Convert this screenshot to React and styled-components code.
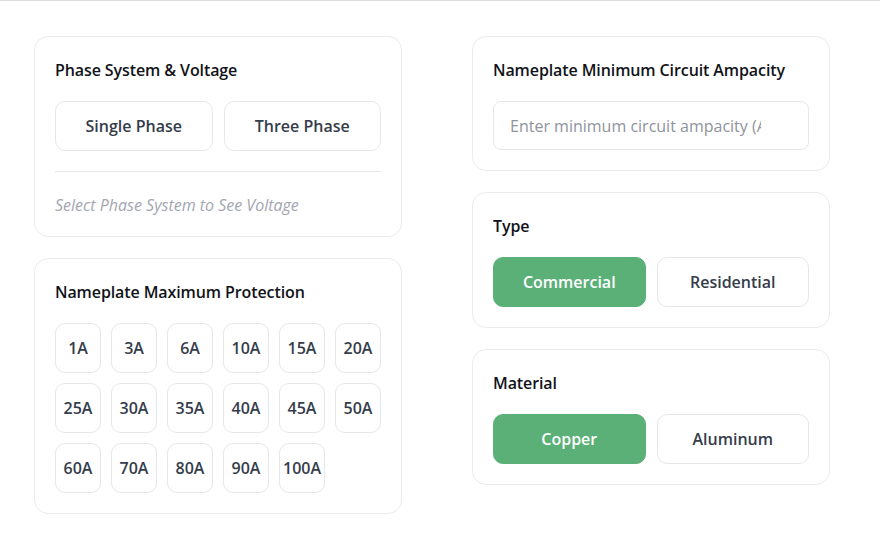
import React, { useState } from "react";
import styled, { createGlobalStyle } from "styled-components";

const Global = createGlobalStyle`
  html, body { margin: 0; padding: 0; background: #ffffff; }
  body { font-family: "Open Sans", "Noto Sans", Arial, sans-serif; }
  * { box-sizing: border-box; }
`;

const Page = styled.div`
  border-top: 1px solid #dcdcdc;
  min-height: 534px;
  padding: 35px 0 0 34px;
  display: grid;
  grid-template-columns: 368px 358px;
  column-gap: 70px;
  align-items: start;
`;

const Column = styled.div`
  display: flex;
  flex-direction: column;
  gap: 21px;
`;

const Card = styled.section`
  background: #fff;
  border: 1px solid #ebebef;
  border-radius: 14px;
  padding: 24px 20px 20px;
`;

const Title = styled.h3`
  margin: 0 0 22px;
  font-size: 16px;
  line-height: 18px;
  font-weight: 600;
  color: #111318;
  letter-spacing: -0.1px;
`;

const Pair = styled.div`
  display: grid;
  grid-template-columns: 1fr 1fr;
  gap: 11px;
`;

const Choice = styled.button`
  height: 50px;
  border-radius: 10px;
  border: 1px solid ${(p) => (p.$active ? "#5bb077" : "#e6e7eb")};
  background: ${(p) => (p.$active ? "#5bb077" : "#ffffff")};
  color: ${(p) => (p.$active ? "#ffffff" : "#353c4a")};
  font-family: inherit;
  font-size: 16px;
  font-weight: 600;
  cursor: pointer;
  padding: 0;
`;

const Divider = styled.hr`
  border: none;
  border-top: 1px solid #e6e7eb;
  margin: 20px 0 22px;
`;

const Hint = styled.p`
  margin: 0;
  font-size: 16px;
  line-height: 22px;
  font-style: italic;
  color: #a3a6b1;
`;

const AmpGrid = styled.div`
  display: grid;
  grid-template-columns: repeat(6, 1fr);
  gap: 10px;
`;

const AmpButton = styled(Choice)`
  border-radius: 10px;
  font-size: 16px;
`;

const Input = styled.input`
  display: block;
  width: 100%;
  height: 49px;
  border: 1px solid #e6e7eb;
  border-radius: 8px;
  padding: 0 32px 0 16px;
  font-family: inherit;
  font-size: 16px;
  color: #353c4a;
  outline: none;
  &::placeholder { color: #8f939d; }
`;

const amps = [1, 3, 6, 10, 15, 20, 25, 30, 35, 40, 45, 50, 60, 70, 80, 90, 100];

export default function App() {
  const [phase, setPhase] = useState(null);
  const [amp, setAmp] = useState(null);
  const [type, setType] = useState("Commercial");
  const [material, setMaterial] = useState("Copper");

  return (
    <>
      <Global />
      <Page>
        <Column>
          <Card>
            <Title>Phase System &amp; Voltage</Title>
            <Pair>
              {["Single Phase", "Three Phase"].map((p) => (
                <Choice key={p} $active={phase === p} onClick={() => setPhase(p)}>
                  {p}
                </Choice>
              ))}
            </Pair>
            <Divider />
            <Hint>Select Phase System to See Voltage</Hint>
          </Card>
          <Card>
            <Title>Nameplate Maximum Protection</Title>
            <AmpGrid>
              {amps.map((a) => (
                <AmpButton key={a} $active={amp === a} onClick={() => setAmp(a)}>
                  {a}A
                </AmpButton>
              ))}
            </AmpGrid>
          </Card>
        </Column>
        <Column>
          <Card>
            <Title>Nameplate Minimum Circuit Ampacity</Title>
            <Input type="number" placeholder="Enter minimum circuit ampacity (A)" />
          </Card>
          <Card>
            <Title>Type</Title>
            <Pair>
              {["Commercial", "Residential"].map((t) => (
                <Choice key={t} $active={type === t} onClick={() => setType(t)}>
                  {t}
                </Choice>
              ))}
            </Pair>
          </Card>
          <Card>
            <Title>Material</Title>
            <Pair>
              {["Copper", "Aluminum"].map((m) => (
                <Choice key={m} $active={material === m} onClick={() => setMaterial(m)}>
                  {m}
                </Choice>
              ))}
            </Pair>
          </Card>
        </Column>
      </Page>
    </>
  );
}
